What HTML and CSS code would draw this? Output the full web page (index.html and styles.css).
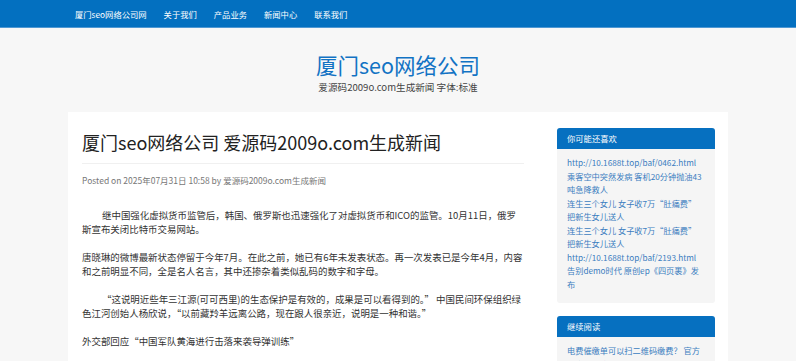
FILE: index.html
```html
<!DOCTYPE html>
<html lang="zh-CN">
<head>
<meta charset="utf-8">
<title>厦门seo网络公司 爱源码2009o.com生成新闻</title>
<link rel="stylesheet" href="styles.css">
</head>
<body>
<nav class="topnav">
  <div class="nav-inner">
    <a href="#" class="nav-link">厦门seo网络公司网</a>
    <a href="#" class="nav-link">关于我们</a>
    <a href="#" class="nav-link">产品业务</a>
    <a href="#" class="nav-link">新闻中心</a>
    <a href="#" class="nav-link">联系我们</a>
  </div>
</nav>
<header class="site-header">
  <h1 class="site-title">厦门seo网络公司</h1>
  <p class="site-desc">爱源码2009o.com生成新闻 字体:标准</p>
</header>
<div class="container">
  <main class="main">
    <h2 class="post-title">厦门seo网络公司 爱源码2009o.com生成新闻</h2>
    <div class="post-meta">Posted on 2025年07月31日 10:58 by 爱源码2009o.com生成新闻</div>
    <div class="post-body">
      <p class="indent">继中国强化虚拟货币监管后，韩国、俄罗斯也迅速强化了对虚拟货币和ICO的监管。10月11日，俄罗斯宣布关闭比特币交易网站。</p>
      <p>唐晓琳的微博最新状态停留于今年7月。在此之前，她已有6年未发表状态。再一次发表已是今年4月，内容和之前明显不同，全是名人名言，其中还掺杂着类似乱码的数字和字母。</p>
      <p class="indent">“这说明近些年三江源(可可西里)的生态保护是有效的，成果是可以看得到的。” 中国民间环保组织绿色江河创始人杨欣说，“以前藏羚羊远离公路，现在跟人很亲近，说明是一种和谐。”</p>
      <p>外交部回应“中国军队黄海进行击落来袭导弹训练”</p>
    </div>
  </main>
  <aside class="sidebar">
    <section class="widget">
      <h3 class="widget-title">你可能还喜欢</h3>
      <ul class="widget-list">
        <li><a href="#">http://10.1688t.top/baf/0462.html</a></li>
        <li><a href="#">乘客空中突然发病 客机20分钟抛油43吨急降救人</a></li>
        <li><a href="#">连生三个女儿 女子收7万“肚痛费”把新生女儿送人</a></li>
        <li><a href="#">连生三个女儿 女子收7万“肚痛费”把新生女儿送人</a></li>
        <li><a href="#">http://10.1688t.top/baf/2193.html</a></li>
        <li><a href="#">告别demo时代 原创ep《四页裹》发布</a></li>
      </ul>
    </section>
    <section class="widget">
      <h3 class="widget-title">继续阅读</h3>
      <ul class="widget-list">
        <li><a href="#">电费催缴单可以扫二维码缴费？ 官方回应：假的</a></li>
        <li><a href="#">连生三个女儿 女子收7万“肚痛费”把新生女儿送人</a></li>
      </ul>
    </section>
  </aside>
</div>
</body>
</html>
```
FILE: styles.css
```css
* { box-sizing: border-box; }
html, body { margin: 0; padding: 0; }
body {
  background: #f7f7f7;
  font-family: "Noto Sans CJK SC", "Noto Sans", sans-serif;
  color: #333;
  overflow: hidden;
}
a { text-decoration: none; }

.topnav {
  height: 28px;
  background: #0370c0;
  border-bottom: 1px solid #4f98d3;
}
.nav-inner {
  width: 660px;
  margin: 0 auto;
  padding-left: 7px;
  display: flex;
  gap: 17px;
  height: 27px;
  align-items: center;
}
.nav-link {
  color: #fff;
  font-size: 8.3px;
  line-height: 12px;
}

.site-header {
  text-align: center;
  padding: 23px 0 18px;
}
.site-title {
  margin: 0;
  font-size: 21.5px;
  line-height: 28px;
  font-weight: 400;
  color: #1273c4;
}
.site-desc {
  margin: 1px 0 0;
  font-size: 9.6px;
  line-height: 14px;
  color: #444;
}

.container {
  width: 660px;
  margin: 0 auto;
  background: #fff;
  display: flex;
  min-height: 260px;
}
.main {
  width: 472px;
  padding: 18px 16px 0 14px;
}
.post-title {
  margin: 0;
  padding-bottom: 9px;
  border-bottom: 1px solid #f0f0f0;
  font-size: 18px;
  line-height: 24px;
  font-weight: 400;
  color: #222;
}
.post-meta {
  margin-top: 9px;
  font-size: 8.5px;
  line-height: 14px;
  color: #777;
}
.post-body {
  margin-top: 21px;
  font-size: 9.45px;
  line-height: 14px;
  color: #333;
}
.post-body p {
  margin: 0 0 14px;
}
.post-body .indent {
  text-indent: 20px;
}

.sidebar {
  width: 188px;
  padding: 16px 13px 0 17px;
}
.widget {
  margin-bottom: 13px;
  background: #f5f5f5;
  border-radius: 3px;
}
.widget-title {
  margin: 0;
  height: 21px;
  padding: 0 10px;
  background: #0670c0;
  border-radius: 3px 3px 0 0;
  color: #fff;
  font-size: 8.3px;
  line-height: 21px;
  font-weight: 400;
}
.widget-list {
  list-style: none;
  margin: 0;
  padding: 7px 12px 12px 10px;
  font-size: 8.2px;
  line-height: 13.5px;
}
.widget-list a {
  color: #3b7dc0;
}
```
